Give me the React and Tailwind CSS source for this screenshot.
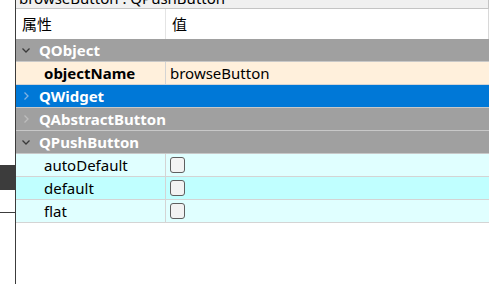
import React from 'react';

const font = { fontFamily: '"Noto Sans", "Noto Sans CJK SC", sans-serif' };

const Chevron = ({ open, color }) => (
    <svg width="10" height="10" viewBox="0 0 10 10" className="shrink-0">
        {open ? (
            <path d="M1.5 3.5 L5 7 L8.5 3.5" fill="none" stroke={color} strokeWidth="1.3" />
        ) : (
            <path d="M3.5 1.5 L7 5 L3.5 8.5" fill="none" stroke={color} strokeWidth="1.3" />
        )}
    </svg>
);

const GroupRow = ({ name, open, bg, chevron }) => (
    <div className={`h-[23px] flex items-center pl-[5px] gap-[8px] border-b border-[#c8c8c8] ${bg}`}>
        <Chevron open={open} color={chevron} />
        <span className="text-white font-bold text-[15px] leading-none">{name}</span>
    </div>
);

const Checkbox = () => (
    <div className="w-[15px] h-[16px] rounded-[3px] border border-[#5f5f5f] bg-[#f3f3f3]" />
);

const PropRow = ({ name, bg, bold, children }) => (
    <div className={`h-[23px] flex border-b border-[#d4d4d4] ${bg}`}>
        <div className={`w-[149px] shrink-0 flex items-center pl-[28px] text-[15px] text-black ${bold ? 'font-bold' : ''}`}>
            {name}
        </div>
        <div className="w-px bg-[#d4d4d4]" />
        <div className="flex-1 flex items-center pl-[4px] text-[15px] text-black">{children}</div>
    </div>
);

export default function App() {
    return (
        <div className="w-[489px] h-[284px] flex bg-white overflow-hidden" style={font}>
            <div className="w-[15px] shrink-0 flex flex-col">
                <div className="h-[165px]" />
                <div className="h-[25px] bg-[#3c3c3c]" />
                <div className="h-[23px] border-b border-[#3c3c3c]" />
            </div>
            <div className="w-px bg-[#3c3c3c]" />
            <div className="flex-1 flex flex-col">
                <div className="h-[9px] bg-[#f0f0f0] border-b border-[#c4c4c4] border-r overflow-hidden">
                    <div className="pl-[3px] mt-[-13px] text-[15px] leading-[22px] text-black whitespace-nowrap">
                        browseButton : QPushButton
                    </div>
                </div>
                <div className="h-[30px] flex bg-white border-r border-[#d8d8d8]">
                    <div className="w-[149px] flex items-center pl-[6px] text-[15px] text-black">属性</div>
                    <div className="w-px bg-[#e4e4e4]" />
                    <div className="flex-1 flex items-center pl-[6px] text-[15px] text-black">值</div>
                </div>
                <GroupRow name="QObject" open bg="bg-[#a0a0a0]" chevron="#3a3a3a" />
                <PropRow name="objectName" bg="bg-[#fff0dc]" bold>browseButton</PropRow>
                <GroupRow name="QWidget" bg="bg-[#0078d7]" chevron="#7fb2e3" />
                <GroupRow name="QAbstractButton" bg="bg-[#a0a0a0]" chevron="#bdbdbd" />
                <GroupRow name="QPushButton" open bg="bg-[#a0a0a0]" chevron="#3a3a3a" />
                <PropRow name="autoDefault" bg="bg-[#e0ffff]"><Checkbox /></PropRow>
                <PropRow name="default" bg="bg-[#c0ffff]"><Checkbox /></PropRow>
                <PropRow name="flat" bg="bg-[#e0ffff]"><Checkbox /></PropRow>
            </div>
        </div>
    );
}
